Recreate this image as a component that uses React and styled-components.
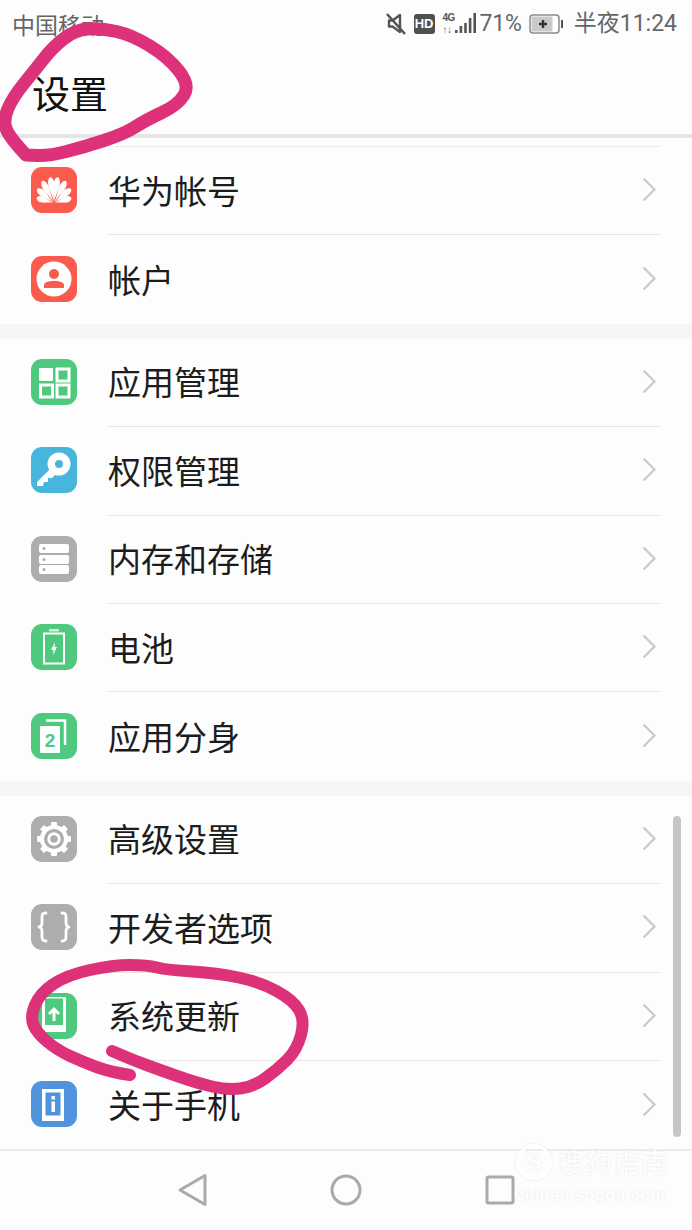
import React from 'react';
import styled, { createGlobalStyle } from 'styled-components';

const GlobalStyle = createGlobalStyle`
  html, body { margin: 0; padding: 0; background: #fdfdfd; }
  * { box-sizing: border-box; }
`;

const Screen = styled.div`
  position: relative;
  width: 692px;
  height: 1230px;
  overflow: hidden;
  background: #fdfdfd;
  font-family: "Noto Sans CJK SC", "Noto Sans", sans-serif;
`;

const StatusBar = styled.div`
  height: 48px;
  display: flex;
  align-items: center;
  justify-content: space-between;
  padding: 0 15px 0 12px;
  color: #666;
  font-size: 23px;
  line-height: 48px;
`;

const StatusRight = styled.div`
  display: flex;
  align-items: center;
`;

const StatusText = styled.span`
  display: flex;
  margin-left: ${props => props.$gap || 0}px;
  font-family: "Roboto", "Noto Sans CJK SC", sans-serif;
  letter-spacing: ${props => props.$tight ? '-0.2px' : '0'};
`;

const HdBadge = styled.span`
  width: 21px;
  height: 20px;
  margin-left: 7px;
  border-radius: 3px;
  background: #505050;
  color: #fff;
  font: 700 13px/20px "Liberation Sans", sans-serif;
  text-align: center;
`;

const NetBlock = styled.div`
  margin-left: 8px;
  display: flex;
  align-items: flex-end;
  height: 24px;
`;

const NetLabel = styled.span`
  width: 12px;
  color: #555;
  font: 700 10px/12px "Liberation Sans", sans-serif;
  letter-spacing: -0.6px;
  align-self: flex-start;
`;

const Header = styled.header`
  height: 90px;
  padding: 20px 0 0 32px;
  border-bottom: 4px solid #e5e5e5;
`;

const PageTitle = styled.h1`
  margin: 0;
  font-size: 38px;
  font-weight: 400;
  line-height: 48px;
  color: #111;
`;

const Section = styled.section`
  border-bottom: ${props => props.$last ? 'none' : '15px solid #f5f5f5'};
`;

const TopRule = styled.div`
  height: 9px;
  margin: 0 31px 0 107px;
  border-bottom: 1px solid #ececec;
`;

const Row = styled.div`
  height: 88.4px;
  display: flex;
  align-items: center;
  padding-left: 31px;
`;

const IconTile = styled.div`
  width: 46px;
  height: 46px;
  flex: none;
  margin-bottom: 2px;
  border-radius: 11px;
  background: ${props => props.$color};
  overflow: hidden;

  svg { display: block; }
`;

const RowBody = styled.div`
  flex: 1;
  height: 100%;
  margin: 0 31px 0 30px;
  padding: 0 5px 2px 1px;
  display: flex;
  align-items: center;
  justify-content: space-between;
  border-bottom: ${props => props.$last ? 'none' : '1px solid #e6e6e6'};
`;

const RowLabel = styled.span`
  font-size: 33px;
  line-height: 44px;
  color: #1c1c1c;
`;

const Footer = styled.nav`
  height: 80px;
  border-top: 2px solid #ececec;
  display: flex;
  align-items: center;
  justify-content: center;
  gap: 122px;
`;

const NavIcon = styled.svg`
  width: 32px;
  height: 34px;
  display: block;
`;

const ScrollThumb = styled.div`
  position: absolute;
  left: 673px;
  top: 816px;
  width: 8px;
  height: 321px;
  border-radius: 4px;
  background: #c6c6c6;
`;

const Watermark = styled.div`
  position: absolute;
  left: 516px;
  top: 1144px;
  width: 156px;
  color: #fff;
  text-shadow: 0 0 2px rgba(0, 0, 0, 0.12);
  pointer-events: none;
`;

const MarkTop = styled.div`
  display: flex;
  align-items: center;
  gap: 5px;
`;

const MarkBadge = styled.span`
  width: 36px;
  height: 36px;
  border-radius: 50%;
  border: 3px solid #fff;
  box-shadow: 0 0 2px rgba(0, 0, 0, 0.14);
  font: 700 22px/30px "Liberation Sans", sans-serif;
  text-align: center;
`;

const MarkName = styled.span`
  font-size: 27px;
  line-height: 36px;
  letter-spacing: 1px;
`;

const MarkUrl = styled.div`
  margin-top: 6px;
  font: 700 16px/18px "Liberation Sans", sans-serif;
  letter-spacing: 0.55px;
`;

const Overlay = styled.svg`
  position: absolute;
  left: 0;
  top: 0;
  pointer-events: none;
`;

// smooth line through hand-traced points
const smooth = (pts) => {
  let d = `M${pts[0][0]} ${pts[0][1]}`;
  for (let i = 1; i < pts.length - 1; i++) {
    const mx = (pts[i][0] + pts[i + 1][0]) / 2;
    const my = (pts[i][1] + pts[i + 1][1]) / 2;
    d += ` Q${pts[i][0]} ${pts[i][1]} ${mx} ${my}`;
  }
  const last = pts[pts.length - 1];
  return `${d} L${last[0]} ${last[1]}`;
};

const topScribble = [[26, 155], [9, 137], [3, 120], [13, 97], [35, 70], [53, 47], [75, 30], [101, 28], [132, 35], [168, 57], [190, 85], [178, 105], [146, 120], [124, 134], [84, 147], [49, 156], [26, 155]];
const lowerScribble = [[130, 1075], [110, 1072], [83, 1062], [57, 1050], [37, 1033], [30, 1017], [40, 993], [67, 975], [113, 965], [147, 965], [167, 970], [217, 973], [260, 982], [293, 1000], [305, 1020], [297, 1050], [277, 1070], [253, 1087], [227, 1090], [197, 1083], [160, 1070], [133, 1060], [112, 1051]];

const Glyph = ({ children }) => (
  <svg width="46" height="46" viewBox="0 0 46 46">{children}</svg>
);

const petals = [[-74, 18], [-50, 22], [-28, 25], [-8, 26], [8, 26], [28, 25], [50, 22], [74, 18]];

const HuaweiIcon = () => (
  <Glyph>
    {petals.map(([angle, len], i) => (
      <path
        key={i}
        fill="#fff"
        transform={`translate(23 36) rotate(${angle})`}
        d={`M0 -1C-.5 ${-len * 0.35} -3.800 ${-len * 0.6} -3 ${-len * 0.82}C-2.400 ${-len * 0.95} -1 ${-len} 0 ${-len}C1 ${-len} 2.400 ${-len * 0.95} 3 ${-len * 0.82}C3.800 ${-len * 0.6} .5 ${-len * 0.35} 0 -1Z`}
      />
    ))}
  </Glyph>
);

const AccountIcon = () => (
  <Glyph>
    <circle cx="23" cy="23" r="17.500" fill="#fff" />
    <circle cx="23" cy="18" r="5" fill="#fa5b4c" />
    <path d="M13 32v-2.500c0-3 3-4.500 10-4.500s10 1.500 10 4.500V32z" fill="#fa5b4c" />
  </Glyph>
);

const AppsIcon = () => (
  <Glyph>
    <rect x="8" y="9" width="14" height="13" rx="1" fill="#fff" />
    <rect x="26" y="10" width="12" height="12" fill="none" stroke="#fff" strokeWidth="3" />
    <rect x="9.500" y="26" width="12" height="12" fill="none" stroke="#fff" strokeWidth="3" />
    <rect x="26" y="26" width="12" height="12" fill="none" stroke="#fff" strokeWidth="3" />
  </Glyph>
);

const KeyIcon = () => (
  <Glyph>
    <path d="M21 20L6 35v4h6l1-4h4v-4h4l5-5z" fill="#fff" />
    <circle cx="28" cy="17" r="11.500" fill="#fff" />
    <circle cx="28" cy="17" r="4" fill="#47b5dc" />
  </Glyph>
);

const StorageIcon = () => (
  <Glyph>
    {[8, 19, 29].map(y => (
      <g key={y}>
        <rect x="8" y={y} width="30" height="9" rx="2" fill="#fff" />
        <circle cx="13" cy={y + 4.500} r="1.500" fill="#adadad" />
      </g>
    ))}
  </Glyph>
);

const BatteryIcon = () => (
  <Glyph>
    <rect x="18" y="5" width="10" height="2.500" rx="1" fill="#fff" opacity="0.75" />
    <rect x="13" y="9.500" width="20" height="30" fill="none" stroke="#fff" strokeWidth="2" />
    <path d="M24 18l-4 8h2.500l-.5 5 4-8h-2.500z" fill="#fff" />
  </Glyph>
);

const CloneIcon = () => (
  <Glyph>
    <path d="M15 7.500h19V32" fill="none" stroke="#fff" strokeWidth="2.500" />
    <rect x="9" y="13" width="20" height="27" rx="1" fill="#fff" />
    <text x="19" y="34" textAnchor="middle" fontFamily="Liberation Sans" fontWeight="700" fontSize="19" fill="#4fc97d">2</text>
  </Glyph>
);

const GearIcon = () => (
  <Glyph>
    {[0, 45, 90, 135].map(a => (
      <rect key={a} x="20" y="6" width="6" height="34" rx="1" fill="#fff" transform={`rotate(${a} 23 23)`} />
    ))}
    <circle cx="23" cy="23" r="14" fill="#fff" />
    <circle cx="23" cy="23" r="10" fill="#adadad" />
    <circle cx="23" cy="23" r="6.700" fill="#fff" />
    <circle cx="23" cy="23" r="3.800" fill="#adadad" />
  </Glyph>
);

const BracesIcon = () => (
  <Glyph>
    <g fill="none" stroke="#fff" strokeWidth="2.800" strokeLinecap="round" strokeLinejoin="round">
      <path d="M15 9c-3 0-4 1-4 4v6c0 2-1 3.500-3 4 2 .5 3 2 3 4v6c0 3 1 4 4 4" />
      <path d="M31 9c3 0 4 1 4 4v6c0 2 1 3.500 3 4-2 .5-3 2-3 4v6c0 3-1 4-4 4" />
    </g>
  </Glyph>
);

const UpdateIcon = () => (
  <Glyph>
    <rect x="11" y="4" width="24" height="35" rx="1" fill="#fff" />
    <rect x="14" y="5.500" width="18" height="26.500" fill="#4fc97d" />
    <path d="M23 28V16M18 21l5-5 5 5" fill="none" stroke="#fff" strokeWidth="3" />
  </Glyph>
);

const InfoIcon = () => (
  <Glyph>
    <rect x="11" y="8" width="22" height="32" fill="#fff" />
    <rect x="14.500" y="11.500" width="15" height="23" fill="#4f94dc" />
    <rect x="20.500" y="15" width="3.500" height="3.500" fill="#fff" />
    <rect x="20.500" y="20.500" width="3.500" height="10.500" fill="#fff" />
  </Glyph>
);

const Chevron = () => (
  <svg width="14" height="25" viewBox="0 0 14 25">
    <path d="M1.500 1.500L12.500 12.500L1.500 23.500" fill="none" stroke="#c9c9c9" strokeWidth="2.200" />
  </svg>
);

const MuteIcon = () => (
  <svg width="22" height="24" viewBox="0 0 22 24">
    <path d="M4 8.500h3.500L15 3v17l-7.500-5.500H4z" fill="none" stroke="#555" strokeWidth="2.400" strokeLinejoin="round" />
    <path d="M2 2l18 20" stroke="#555" strokeWidth="2.600" />
  </svg>
);

const SignalBars = () => (
  <svg width="22" height="24" viewBox="0 0 22 24">
    <rect x="0" y="18" width="2.600" height="3" fill="#555" />
    <rect x="4.600" y="14" width="2.600" height="7" fill="#555" />
    <rect x="9.200" y="11" width="2.600" height="10" fill="#555" />
    <rect x="13.800" y="6" width="2.600" height="15" fill="#555" />
    <rect x="18.400" y="1" width="2.600" height="20" fill="#555" />
  </svg>
);

const BatteryStatus = () => (
  <svg width="34" height="20" viewBox="0 0 34 20">
    <rect x="1" y="1" width="29" height="18" rx="3" fill="#fff" stroke="#8a8a8a" strokeWidth="1.500" />
    <rect x="2.500" y="2.500" width="21" height="15" fill="#c9c9c9" />
    <path d="M10 10h8M14 6v8" stroke="#333" strokeWidth="2.400" />
    <rect x="32" y="6" width="2" height="8" fill="#555" />
  </svg>
);

const sections = [
  [
    { label: '华为帐号', color: '#fa5b4c', Icon: HuaweiIcon },
    { label: '帐户', color: '#fa5b4c', Icon: AccountIcon },
  ],
  [
    { label: '应用管理', color: '#4fc97d', Icon: AppsIcon },
    { label: '权限管理', color: '#47b5dc', Icon: KeyIcon },
    { label: '内存和存储', color: '#adadad', Icon: StorageIcon },
    { label: '电池', color: '#4fc97d', Icon: BatteryIcon },
    { label: '应用分身', color: '#4fc97d', Icon: CloneIcon },
  ],
  [
    { label: '高级设置', color: '#adadad', Icon: GearIcon },
    { label: '开发者选项', color: '#adadad', Icon: BracesIcon },
    { label: '系统更新', color: '#4fc97d', Icon: UpdateIcon },
    { label: '关于手机', color: '#4f94dc', Icon: InfoIcon },
  ],
];

const App = () => (
  <Screen>
    <GlobalStyle />
    <StatusBar>
      <span>中国移动</span>
      <StatusRight>
        <MuteIcon />
        <HdBadge>HD</HdBadge>
        <NetBlock>
          <NetLabel>4G<br />↑↓</NetLabel>
          <SignalBars />
        </NetBlock>
        <StatusText $gap={3} $tight>71%</StatusText>
        <StatusText $gap={7}><BatteryStatus /></StatusText>
        <StatusText $gap={11}>半夜11:24</StatusText>
      </StatusRight>
    </StatusBar>
    <Header>
      <PageTitle>设置</PageTitle>
    </Header>
    <TopRule />
    {sections.map((rows, s) => (
      <Section key={s} $last={s === sections.length - 1}>
        {rows.map((row, r) => (
          <Row key={row.label}>
            <IconTile $color={row.color}><row.Icon /></IconTile>
            <RowBody $last={r === rows.length - 1}>
              <RowLabel>{row.label}</RowLabel>
              <Chevron />
            </RowBody>
          </Row>
        ))}
      </Section>
    ))}
    <Footer>
      <NavIcon viewBox="0 0 32 34">
        <path d="M29 2.500V31.500L4 17z" fill="none" stroke="#aaa" strokeWidth="3" strokeLinejoin="round" />
      </NavIcon>
      <NavIcon viewBox="0 0 32 34">
        <circle cx="16" cy="17" r="14" fill="none" stroke="#aaa" strokeWidth="3" />
      </NavIcon>
      <NavIcon viewBox="0 0 32 34">
        <rect x="3" y="4" width="26" height="26" rx="1.500" fill="none" stroke="#aaa" strokeWidth="3" />
      </NavIcon>
    </Footer>
    <ScrollThumb />
    <Watermark>
      <MarkTop>
        <MarkBadge>S</MarkBadge>
        <MarkName>搜狗指南</MarkName>
      </MarkTop>
      <MarkUrl>zhinan.sogou.com</MarkUrl>
    </Watermark>
    <Overlay width="692" height="1230" viewBox="0 0 692 1230">
      <path d={smooth(topScribble)} fill="none" stroke="#dd327a" strokeWidth="13" strokeLinecap="round" strokeLinejoin="round" />
      <path d={smooth(lowerScribble)} fill="none" stroke="#dd327a" strokeWidth="12" strokeLinecap="round" strokeLinejoin="round" />
    </Overlay>
  </Screen>
);

export default App;
